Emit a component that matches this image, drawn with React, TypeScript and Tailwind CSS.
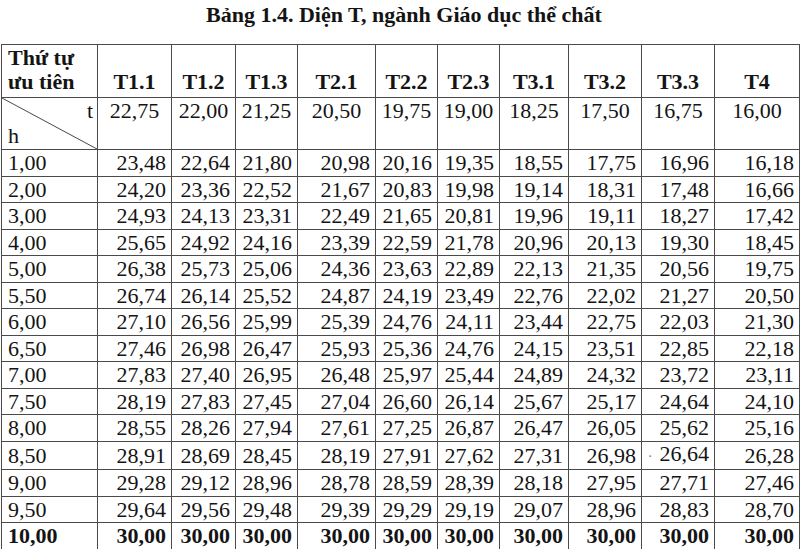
const cols = ['T1.1', 'T1.2', 'T1.3', 'T2.1', 'T2.2', 'T2.3', 'T3.1', 'T3.2', 'T3.3', 'T4'];
const widths = [96, 74, 64, 62, 78, 62, 62, 69, 73, 73, 85];
const tRow = ['22,75', '22,00', '21,25', '20,50', '19,75', '19,00', '18,25', '17,50', '16,75', '16,00'];

const rows: [string, string[]][] = [
  ['1,00', ['23,48', '22,64', '21,80', '20,98', '20,16', '19,35', '18,55', '17,75', '16,96', '16,18']],
  ['2,00', ['24,20', '23,36', '22,52', '21,67', '20,83', '19,98', '19,14', '18,31', '17,48', '16,66']],
  ['3,00', ['24,93', '24,13', '23,31', '22,49', '21,65', '20,81', '19,96', '19,11', '18,27', '17,42']],
  ['4,00', ['25,65', '24,92', '24,16', '23,39', '22,59', '21,78', '20,96', '20,13', '19,30', '18,45']],
  ['5,00', ['26,38', '25,73', '25,06', '24,36', '23,63', '22,89', '22,13', '21,35', '20,56', '19,75']],
  ['5,50', ['26,74', '26,14', '25,52', '24,87', '24,19', '23,49', '22,76', '22,02', '21,27', '20,50']],
  ['6,00', ['27,10', '26,56', '25,99', '25,39', '24,76', '24,11', '23,44', '22,75', '22,03', '21,30']],
  ['6,50', ['27,46', '26,98', '26,47', '25,93', '25,36', '24,76', '24,15', '23,51', '22,85', '22,18']],
  ['7,00', ['27,83', '27,40', '26,95', '26,48', '25,97', '25,44', '24,89', '24,32', '23,72', '23,11']],
  ['7,50', ['28,19', '27,83', '27,45', '27,04', '26,60', '26,14', '25,67', '25,17', '24,64', '24,10']],
  ['8,00', ['28,55', '28,26', '27,94', '27,61', '27,25', '26,87', '26,47', '26,05', '25,62', '25,16']],
  ['8,50', ['28,91', '28,69', '28,45', '28,19', '27,91', '27,62', '27,31', '26,98', '26,64', '26,28']],
  ['9,00', ['29,28', '29,12', '28,96', '28,78', '28,59', '28,39', '28,18', '27,95', '27,71', '27,46']],
  ['9,50', ['29,64', '29,56', '29,48', '29,39', '29,29', '29,19', '29,07', '28,96', '28,83', '28,70']],
  ['10,00', ['30,00', '30,00', '30,00', '30,00', '30,00', '30,00', '30,00', '30,00', '30,00', '30,00']],
];

export default function App() {
  return (
    <div
      className="w-[800px] h-[549px] bg-white text-[#141414] overflow-hidden"
      style={{ fontFamily: '"Liberation Serif", "Times New Roman", serif' }}
    >
      <div className="h-[44px] pt-[2px] text-center text-[22px] font-bold leading-[26px] pl-[8px]">
        Bảng 1.4. Diện T, ngành Giáo dục thể chất
      </div>
      <table className="ml-[1px] w-[798px] table-fixed border-collapse text-[22px]">
        <colgroup>
          {widths.map((w, i) => (
            <col key={i} style={{ width: w }} />
          ))}
        </colgroup>
        <tbody>
          <tr className="h-[53px]">
            <td className="border border-[#4a4a4a] align-bottom pl-[6px] pb-[3px] font-bold leading-[24px]">
              Thứ tự
              <br />
              ưu tiên
            </td>
            {cols.map((c) => (
              <td key={c} className="border border-[#4a4a4a] align-bottom text-center pb-[3px] font-bold leading-[24px]">
                {c}
              </td>
            ))}
          </tr>
          <tr className="h-[52px]">
            <td className="relative border border-[#4a4a4a] p-0">
              <svg className="absolute inset-0 w-full h-full" preserveAspectRatio="none" viewBox="0 0 96 52">
                <line x1="0" y1="0" x2="96" y2="52" stroke="#444" strokeWidth="1" />
              </svg>
              <span className="absolute right-[4px] top-[1px] leading-[24px]">t</span>
              <span className="absolute left-[6px] bottom-[1px] leading-[24px]">h</span>
            </td>
            {tRow.map((v, i) => (
              <td key={i} className="border border-[#4a4a4a] align-top text-center pt-[1px] leading-[24px]">
                {v}
              </td>
            ))}
          </tr>
          {rows.map(([h, vals], ri) => {
            const last = ri === rows.length - 1;
            return (
              <tr key={h} className={ri % 2 === 0 ? 'h-[27px]' : 'h-[26px]'}>
                <td className={`border border-[#4a4a4a] pl-[6px] leading-[24px] ${last ? 'font-bold' : ''}`}>{h}</td>
                {vals.map((v, i) => (
                  <td
                    key={i}
                    className={`border border-[#4a4a4a] text-right pr-[5px] leading-[24px] whitespace-nowrap ${last ? 'font-bold' : ''}`}
                  >
                    {h === '8,50' && i === 8 ? <span className="text-[14px] text-[#777] mr-[7px]">·</span> : null}
                    {v}
                  </td>
                ))}
              </tr>
            );
          })}
        </tbody>
      </table>
    </div>
  );
}
